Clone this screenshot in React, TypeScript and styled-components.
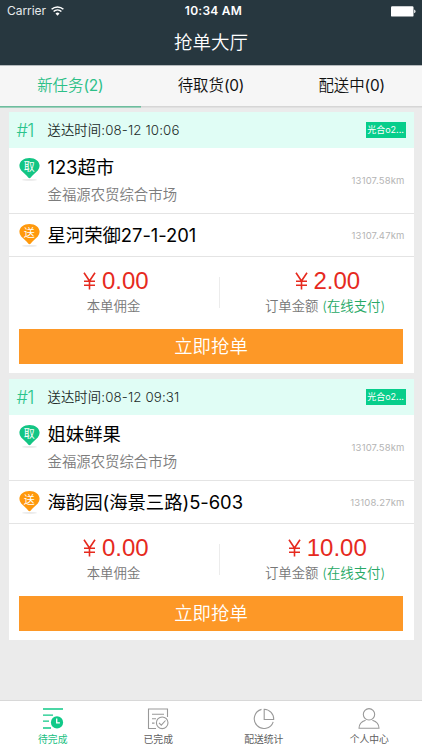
import React from "react";
import styled, { createGlobalStyle } from "styled-components";

const GlobalStyle = createGlobalStyle`
  * { box-sizing: border-box; }
  body {
    margin: 0;
    background: #ebebeb;
    font-family: Inter, "Noto Sans CJK SC", sans-serif;
    font-weight: 400;
  }
  svg { display: block; }
`;

const Screen = styled.div`
  width: 422px;
  height: 750px;
  display: flex;
  flex-direction: column;
  overflow: hidden;
  background: #ebebeb;
`;

const Header = styled.header`
  height: 65px;
  flex: none;
  background: #27373f;
  color: #fff;
`;

const StatusBar = styled.div`
  height: 22px;
  padding: 0 6px 0 7px;
  display: grid;
  grid-template-columns: 1fr auto 1fr;
  align-items: center;
  font-size: 12px;
  line-height: 22px;
`;

const Carrier = styled.div`
  display: flex;
  align-items: center;
  gap: 5px;
  letter-spacing: -0.05px;
  color: #e6eaec;
`;

const Clock = styled.div`
  font-weight: 600;
  letter-spacing: 0.25px;
  transform: translateX(2px);
`;

const Battery = styled.div`
  justify-self: end;
`;

const Title = styled.h1`
  margin: 0;
  height: 43px;
  line-height: 41px;
  text-align: center;
  font-size: 18.5px;
  font-weight: 350;
`;

const Tabs = styled.nav`
  height: 41px;
  flex: none;
  display: grid;
  grid-template-columns: repeat(3, 1fr);
  background: #f6f6f6;
  border-top: 1px solid #b5babd;
`;

const Tab = styled.div<{ $active?: boolean }>`
  border-bottom: 1px solid ${(p) => (p.$active ? "#6dbd9e" : "#d6d6d6")};
  box-shadow: 0 1px 0 ${(p) => (p.$active ? "#9bcfba" : "#e0e0e0")};
  color: ${(p) => (p.$active ? "#2cc088" : "#111")};
  font-size: 15.4px;
  font-weight: 350;
  line-height: 40px;
  text-align: center;
`;

const TabCount = styled.span`
  font-weight: 400;
  letter-spacing: -0.2px;
`;

const List = styled.main`
  flex: 1;
  padding: 6px 8.5px 0;
  display: flex;
  flex-direction: column;
  gap: 6px;
`;

const Card = styled.article`
  height: 261px;
  background: #fff;
`;

const CardHead = styled.div`
  height: 36px;
  padding: 0 8px 0 8px;
  display: flex;
  align-items: center;
  background: #e0fdf5;
`;

const Index = styled.div`
  width: 31px;
  font-size: 18px;
  font-weight: 300;
  letter-spacing: -0.6px;
  color: #2bc48c;
`;

const Deadline = styled.div`
  flex: 1;
  font-size: 13.3px;
  line-height: 20px;
  font-weight: 350;
  letter-spacing: 0.14px;
  color: #222b29;
`;

const Source = styled.div`
  width: 40px;
  height: 16px;
  background: #07ce8b;
  color: #fff;
  font-size: 9px;
  line-height: 16px;
  text-align: center;
  white-space: nowrap;
`;

const Stop = styled.div<{ $height: number }>`
  height: ${(p) => p.$height}px;
  padding: 0 9px 0 10px;
  display: flex;
  border-bottom: 1px solid #e4e4e4;
`;

const PinBox = styled.div`
  width: 29px;
  flex: none;
  padding-top: 9px;
`;

const Place = styled.div`
  flex: 1;
  padding-top: 5px;
  white-space: nowrap;
`;

const PlaceName = styled.div<{ $top: number }>`
  padding-top: ${(p) => p.$top}px;
  font-size: 18.4px;
  line-height: 26px;
  font-weight: 400;
  letter-spacing: -0.05px;
  color: #000;
`;

const Market = styled.div`
  margin-top: 4px;
  font-size: 14.4px;
  line-height: 22px;
  font-weight: 350;
  color: #7c7c7c;
`;

const Distance = styled.div`
  align-self: center;
  font-size: 9.5px;
  letter-spacing: 0.15px;
  color: #b4b4b4;
`;

const Amounts = styled.div`
  height: 72px;
  display: grid;
  grid-template-columns: 210px 1px 1fr;
`;

const Divider = styled.div`
  margin-top: 20px;
  height: 31px;
  background: #ececec;
`;

const Amount = styled.div<{ $inset?: number }>`
  padding-top: 9px;
  padding-left: ${(p) => p.$inset ?? 0}px;
  text-align: center;
`;

const Price = styled.div`
  height: 30px;
  padding-left: 4px;
  font: 24px/30px "Liberation Sans", sans-serif;
  color: #e62a1e;
  display: flex;
  justify-content: center;
  align-items: center;
  gap: 4.5px;
`;

const Yen = styled.svg`
  width: 15px;
  height: 18px;
  fill: none;
  stroke: currentColor;
  stroke-width: 1.6;
`;

const Caption = styled.div`
  font-size: 13.4px;
  line-height: 20px;
  font-weight: 350;
  color: #777;
`;

const Paid = styled.span`
  color: #27a966;
`;

const GrabButton = styled.button`
  display: block;
  width: 384px;
  height: 35px;
  margin: 0 auto 0 10.5px;
  padding: 0 0 1px;
  border: 0;
  background: #fd9827;
  color: #fff;
  font-family: inherit;
  font-size: 18.4px;
  font-weight: 350;
  line-height: 34px;
`;

const BottomBar = styled.nav`
  height: 50px;
  flex: none;
  display: grid;
  grid-template-columns: repeat(4, 1fr);
  background: #fff;
  border-top: 1px solid #d8d8d8;
`;

const BottomItem = styled.div<{ $active?: boolean }>`
  display: flex;
  flex-direction: column;
  align-items: center;
  padding-top: 7px;
  font-size: 9.8px;
  line-height: 15px;
  color: ${(p) => (p.$active ? "#18bf83" : "#606060")};
  svg {
    color: ${(p) => (p.$active ? "#10c988" : "#999")};
    margin-bottom: 2px;
    fill: none;
    stroke: currentColor;
    stroke-width: 1.1;
  }
`;

const PinText = styled.text`
  font-family: "Noto Sans CJK SC", sans-serif;
  font-size: 11px;
  text-anchor: middle;
  fill: #fff;
`;

const Pin = ({ color, label }: { color: string; label: string }) => (
  <svg width="21" height="25" viewBox="0 0 21 25">
    <ellipse cx="10.5" cy="22.9" rx="7.5" ry="0.8" fill="#e8e8e8" />
    <path d="M10.5 21.2C9.7 21.2 8.8 19.9 7.5 18.4L2.2 13.5A9.3 7.9 0 0 1 .4 8.8C.4 4.3 4.8 1 10.5 1s10.1 3.3 10.1 7.8a8 8 0 0 1-1.8 4.7l-5.3 4.9c-1.3 1.5-2.2 2.8-3 2.8Z" fill={color} />
    <PinText x="10.3" y="13.5">{label}</PinText>
  </svg>
);

const Money = ({ value }: { value: string }) => (
  <Price>
    <Yen viewBox="0 0 15 18" aria-label="¥">
      <path d="M2 .8 7.5 9 13 .8M7.5 9v8.5M2 9.3h11M2 13.2h11" />
    </Yen>
    {value}
  </Price>
);

const WifiIcon = () => (
  <svg width="13" height="10" viewBox="0 0 13 10" fill="none" stroke="#fff" strokeWidth="1.5">
    <path d="M.6 3.3a8.5 8.5 0 0 1 11.8 0M2.6 5.5a5.7 5.7 0 0 1 7.8 0" />
    <path d="M6.5 9.7 4.5 7.5a3 3 0 0 1 4 0Z" fill="#fff" stroke="none" />
  </svg>
);

const BatteryIcon = () => (
  <svg width="25" height="11" viewBox="0 0 25 11" fill="#fff">
    <rect x="0" y=".2" width="22.5" height="10.4" rx="1.2" />
    <path d="M23.2 3.5c1.8.5 1.8 3.3 0 3.8Z" />
  </svg>
);

const PendingIcon = () => (
  <svg width="22" height="22" viewBox="0 0 22 22">
    <path d="M1 1h20M1 7.2h10M1 13.2h6M1 20h8" strokeWidth="1.3" />
    <circle cx="15" cy="14.4" r="6.1" fill="currentColor" stroke="none" />
    <path d="M14.7 10.6v4.2h3.2" stroke="#fff" strokeWidth="1.3" />
  </svg>
);

const DoneIcon = () => (
  <svg width="22" height="22" viewBox="0 0 22 22">
    <path d="M9 20.5H1.5V1h19v8M5 6.2h12M5 10.7h4M5 15.1h2.5" />
    <circle cx="15.2" cy="14.8" r="5.8" />
    <path d="m12 14.8 2.3 2.3 4.2-4.6" />
  </svg>
);

const StatsIcon = () => (
  <svg width="22" height="22" viewBox="0 0 22 22">
    <path d="M8.5 1.4A9.7 9.7 0 1 0 20.2 13.8" />
    <path d="M11.2 1.2v10.3h9.5A9.8 9.8 0 0 0 11.2 1.2Z" />
  </svg>
);

const PersonIcon = () => (
  <svg width="22" height="22" viewBox="0 0 22 22">
    <circle cx="11" cy="6.3" r="5.7" />
    <path d="M7.6 12.2C4 13.3 1 16 1 20.3h20c0-4.3-3-7-6.6-8.1" />
  </svg>
);

type Order = {
  time: string;
  shop: string;
  shopKm: string;
  address: string;
  addressKm: string;
  total: string;
};

const orders: Order[] = [
  { time: "08-12 10:06", shop: "123超市", shopKm: "13107.58km", address: "星河荣御27-1-201", addressKm: "13107.47km", total: "2.00" },
  { time: "08-12 09:31", shop: "姐妹鲜果", shopKm: "13107.58km", address: "海韵园(海景三路)5-603", addressKm: "13108.27km", total: "10.00" },
];

const OrderCard = ({ order }: { order: Order }) => (
  <Card>
    <CardHead>
      <Index>#1</Index>
      <Deadline>送达时间:{order.time}</Deadline>
      <Source>光合o2...</Source>
    </CardHead>
    <Stop $height={66}>
      <PinBox><Pin color="#13c584" label="取" /></PinBox>
      <Place>
        <PlaceName $top={1}>{order.shop}</PlaceName>
        <Market>金福源农贸综合市场</Market>
      </Place>
      <Distance>{order.shopKm}</Distance>
    </Stop>
    <Stop $height={43}>
      <PinBox><Pin color="#ff990d" label="送" /></PinBox>
      <Place>
        <PlaceName $top={3}>{order.address}</PlaceName>
      </Place>
      <Distance>{order.addressKm}</Distance>
    </Stop>
    <Amounts>
      <Amount>
        <Money value="0.00" />
        <Caption>本单佣金</Caption>
      </Amount>
      <Divider />
      <Amount $inset={17}>
        <Money value={order.total} />
        <Caption>订单金额 <Paid>(在线支付)</Paid></Caption>
      </Amount>
    </Amounts>
    <GrabButton>立即抢单</GrabButton>
  </Card>
);

export default function App() {
  return (
    <>
      <GlobalStyle />
      <Screen>
        <Header>
          <StatusBar>
            <Carrier>Carrier <WifiIcon /></Carrier>
            <Clock>10:34 AM</Clock>
            <Battery><BatteryIcon /></Battery>
          </StatusBar>
          <Title>抢单大厅</Title>
        </Header>
        <Tabs>
          <Tab $active>新任务<TabCount>(2)</TabCount></Tab>
          <Tab>待取货<TabCount>(0)</TabCount></Tab>
          <Tab>配送中<TabCount>(0)</TabCount></Tab>
        </Tabs>
        <List>
          {orders.map((order) => (
            <OrderCard key={order.time} order={order} />
          ))}
        </List>
        <BottomBar>
          <BottomItem $active><PendingIcon />待完成</BottomItem>
          <BottomItem><DoneIcon />已完成</BottomItem>
          <BottomItem><StatsIcon />配送统计</BottomItem>
          <BottomItem><PersonIcon />个人中心</BottomItem>
        </BottomBar>
      </Screen>
    </>
  );
}
